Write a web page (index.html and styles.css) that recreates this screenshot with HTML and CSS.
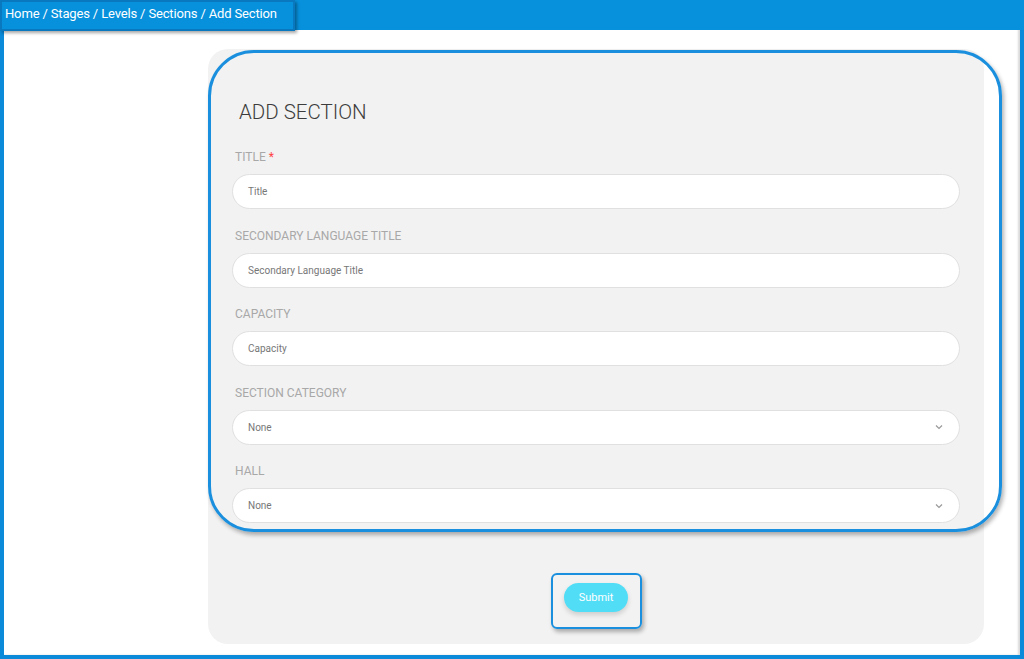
FILE: index.html
```html
<!DOCTYPE html>
<html>
<head>
<meta charset="utf-8">
<link rel="stylesheet" href="styles.css">
</head>
<body>
<div class="frame">
  <header class="topbar">
    <nav class="crumbs">Home / Stages / Levels / Sections / Add Section</nav>
  </header>
  <main class="content">
    <div class="spacer"></div>
    <section class="card">
      <h1 class="card-title">ADD SECTION</h1>
      <form class="form">
        <div class="field">
          <label class="label">TITLE <span class="req">*</span></label>
          <div class="input"><span class="ph">Title</span></div>
        </div>
        <div class="field">
          <label class="label">SECONDARY LANGUAGE TITLE</label>
          <div class="input"><span class="ph">Secondary Language Title</span></div>
        </div>
        <div class="field">
          <label class="label">CAPACITY</label>
          <div class="input"><span class="ph">Capacity</span></div>
        </div>
        <div class="field">
          <label class="label">SECTION CATEGORY</label>
          <div class="input select"><span class="ph">None</span>
            <svg class="chev" width="8" height="6" viewBox="0 0 8 6"><path d="M1 1.5 L4 4.5 L7 1.5" fill="none" stroke="#999" stroke-width="1.2"/></svg>
          </div>
        </div>
        <div class="field">
          <label class="label">HALL</label>
          <div class="input select"><span class="ph">None</span>
            <svg class="chev" width="8" height="6" viewBox="0 0 8 6"><path d="M1 1.5 L4 4.5 L7 1.5" fill="none" stroke="#999" stroke-width="1.2"/></svg>
          </div>
        </div>
        <div class="actions">
          <button type="button" class="submit">Submit</button>
        </div>
      </form>
    </section>
  </main>
  <div class="hl hl-crumbs"></div>
  <div class="hl hl-form"></div>
  <div class="hl hl-submit"></div>
</div>
</body>
</html>
```
FILE: styles.css
```css
* { box-sizing: border-box; }
html, body { margin: 0; padding: 0; }
body {
  font-family: Roboto, "Liberation Sans", Arial, sans-serif;
  background: #fff;
  width: 1024px;
  height: 659px;
  overflow: hidden;
}
.frame {
  position: relative;
  width: 1024px;
  height: 659px;
  border-left: 4px solid #0a8ad8;
  border-right: 4px solid #0a8ad8;
  border-bottom: 4px solid #0a8ad8;
  display: flex;
  flex-direction: column;
  background: #fff;
  box-shadow: inset -2px 0 2px rgba(0,0,0,0.15);
}
.topbar {
  height: 30px;
  background: #0791dd;
  flex: none;
  margin: 0 -4px;
  padding-left: 5px;
}
.crumbs {
  color: #fff;
  font-size: 13px;
  line-height: 27px;
  letter-spacing: -0.15px;
}
.content {
  display: flex;
  padding-top: 19px;
  flex: 1;
}
.spacer { width: 204px; flex: none; }
.card {
  width: 776px;
  height: 595px;
  background: #f2f2f2;
  border-radius: 20px;
  padding: 51px 24px 0 24px;
}
.card-title {
  margin: 0 0 26px 7px;
  font-size: 20.5px;
  font-weight: 300;
  color: #3c3c3c;
  line-height: 24px;
}
.form { display: flex; flex-direction: column; }
.field { margin-bottom: 19.5px; }
.label {
  display: block;
  font-size: 12px;
  color: #a8a8a8;
  margin-left: 3px;
  line-height: 14px;
  margin-bottom: 10px;
}
.req { color: #f44; }
.input {
  height: 35px;
  background: #fff;
  border: 1px solid #e0e0e0;
  border-radius: 18px;
  display: flex;
  align-items: center;
  padding: 0 16px 0 15px;
}
.ph { font-size: 10px; color: #777; }
.select { justify-content: space-between; }
.actions {
  display: flex;
  justify-content: center;
  padding-top: 40px;
}
.submit {
  width: 64px;
  height: 29px;
  border: none;
  border-radius: 15px;
  background: #52ddf6;
  color: #fff;
  font-family: Roboto, "Liberation Sans", Arial, sans-serif;
  font-size: 11px;
  font-weight: 400;
  box-shadow: 0 3px 5px rgba(0,0,0,0.15);
}
.hl { position: absolute; pointer-events: none; }
.hl-crumbs {
  left: -4px; top: 0;
  width: 295px; height: 31px;
  border: 2px solid #0a78bf;
  box-shadow: 2px 2px 3px rgba(0,0,0,0.35);
}
.hl-form {
  left: 204px; top: 50px;
  width: 794px; height: 482px;
  border: 3px solid #1a8fdd;
  border-radius: 46px;
  box-shadow: 2px 3px 4px rgba(0,0,0,0.3);
}
.hl-submit {
  left: 547px; top: 573px;
  width: 91px; height: 56px;
  border: 2px solid #1a8fdd;
  border-radius: 6px;
  box-shadow: 2px 3px 4px rgba(0,0,0,0.3);
}
```
